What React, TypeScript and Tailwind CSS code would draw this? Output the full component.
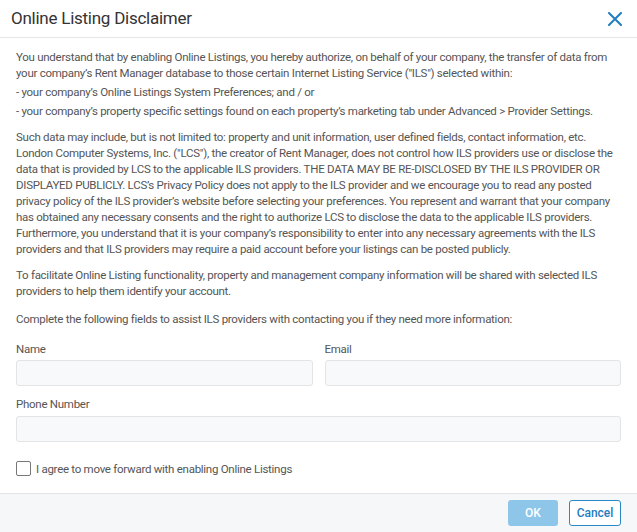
import React from "react";

export default function App() {
  return (
    <div className="w-[637px] h-[532px] bg-white flex flex-col overflow-hidden" style={{ fontFamily: "Roboto, 'Liberation Sans', sans-serif" }}>
      <div className="h-[38px] shrink-0 border-b border-[#e6e6e6] flex items-center justify-between pl-[11px] pr-[15px]">
        <div className="text-[17px] tracking-[-0.25px] text-[#333] leading-none">Online Listing Disclaimer</div>
        <svg width="14" height="14" viewBox="0 0 14 14" className="block">
          <path d="M1 1 L13 13 M13 1 L1 13" stroke="#1f7dc0" strokeWidth="2" strokeLinecap="round" />
        </svg>
      </div>
      <div className="flex-1 min-h-0 px-4 pt-[10.5px] text-[11.5px] tracking-[-0.27px] leading-[16px] text-[#555]">
        <p>You understand that by enabling Online Listings, you hereby authorize, on behalf of your company, the transfer of data from your company’s Rent Manager database to those certain Internet Listing Service ("ILS") selected within:</p>
        <p className="mt-[3px]">- your company’s Online Listings System Preferences; and / or</p>
        <p className="mt-[3px]">- your company’s property specific settings found on each property’s marketing tab under Advanced &gt; Provider Settings.</p>
        <p className="mt-[10px]">Such data may include, but is not limited to: property and unit information, user defined fields, contact information, etc. London Computer Systems, Inc. ("LCS"), the creator of Rent Manager, does not control how ILS providers use or disclose the data that is provided by LCS to the applicable ILS providers. THE DATA MAY BE RE-DISCLOSED BY THE ILS PROVIDER OR DISPLAYED PUBLICLY. LCS’s Privacy Policy does not apply to the ILS provider and we encourage you to read any posted privacy policy of the ILS provider’s website before selecting your preferences. You represent and warrant that your company has obtained any necessary consents and the right to authorize LCS to disclose the data to the applicable ILS providers. Furthermore, you understand that it is your company’s responsibility to enter into any necessary agreements with the ILS providers and that ILS providers may require a paid account before your listings can be posted publicly.</p>
        <p className="mt-[10.5px]">To facilitate Online Listing functionality, property and management company information will be shared with selected ILS providers to help them identify your account.</p>
        <p className="mt-[11.5px]">Complete the following fields to assist ILS providers with contacting you if they need more information:</p>
        <div className="mt-[14px] grid grid-cols-2 gap-x-[12px]">
          <div>
            <div>Name</div>
            <div className="mt-[3px] h-[26px] rounded-[3px] border border-[#e3e4e6] bg-[#f8f9fa]" />
          </div>
          <div>
            <div>Email</div>
            <div className="mt-[3px] h-[26px] rounded-[3px] border border-[#e3e4e6] bg-[#f8f9fa]" />
          </div>
        </div>
        <div className="mt-[10px]">
          <div>Phone Number</div>
          <div className="mt-[4px] h-[26px] rounded-[3px] border border-[#e3e4e6] bg-[#f8f9fa]" />
        </div>
        <div className="mt-[19px] flex items-center gap-[5px]">
          <div className="w-[15px] h-[15px] rounded-[2px] border-[1.5px] border-[#777] bg-white" />
          <span>I agree to move forward with enabling Online Listings</span>
        </div>
      </div>
      <div className="h-[39px] shrink-0 border-t border-[#e3e3e3] bg-[#f6f7f8] flex items-center justify-end gap-[11px] pr-[16px]">
        <button className="w-[50px] h-[26px] rounded-[3px] bg-[#8ec6ea] text-white text-[12px] font-medium">OK</button>
        <button className="w-[52px] h-[26px] rounded-[3px] border border-[#2a88c8] bg-white text-[#1f7dc0] text-[12px] font-medium">Cancel</button>
      </div>
    </div>
  );
}
